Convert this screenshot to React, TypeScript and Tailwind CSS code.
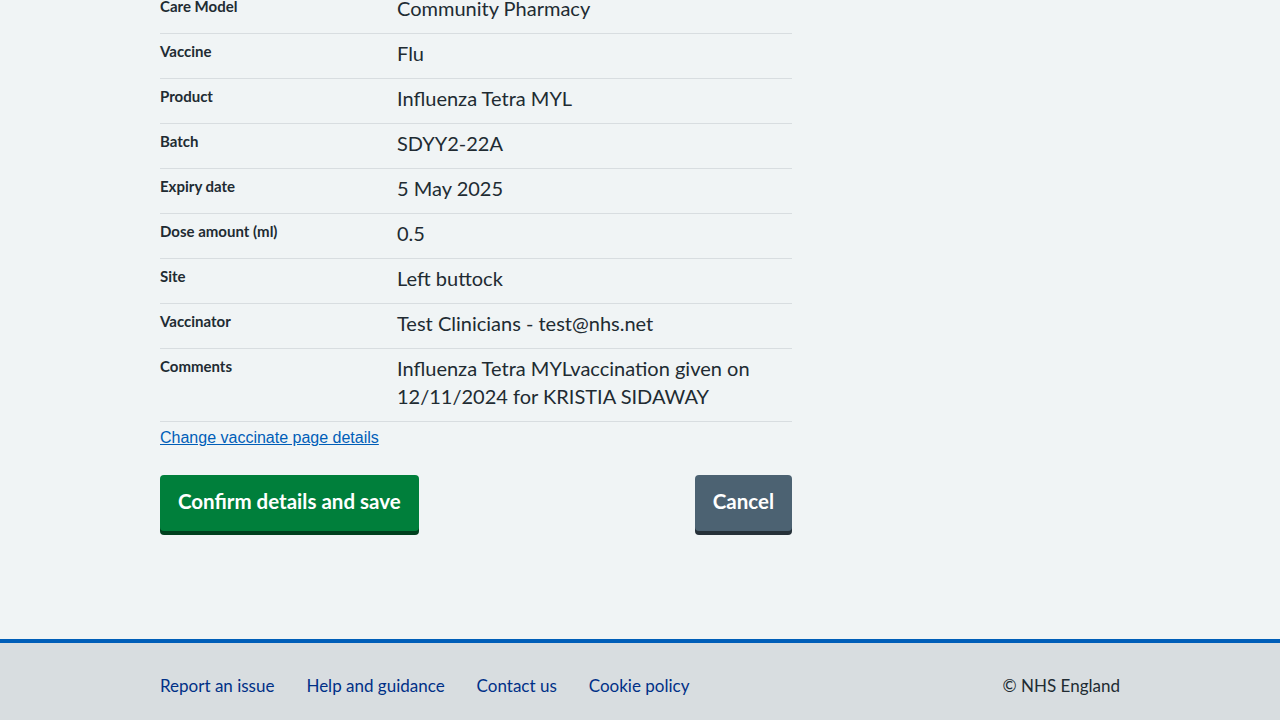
import React from 'react';

const rows: { label: string; value: string }[] = [
  { label: 'Care Model', value: 'Community Pharmacy' },
  { label: 'Vaccine', value: 'Flu' },
  { label: 'Product', value: 'Influenza Tetra MYL' },
  { label: 'Batch', value: 'SDYY2-22A' },
  { label: 'Expiry date', value: '5 May 2025' },
  { label: 'Dose amount (ml)', value: '0.5' },
  { label: 'Site', value: 'Left buttock' },
  { label: 'Vaccinator', value: 'Test Clinicians - test@nhs.net' },
  { label: 'Comments', value: 'Influenza Tetra MYLvaccination given on 12/11/2024 for KRISTIA SIDAWAY' },
];

const footerLinks = ['Report an issue', 'Help and guidance', 'Contact us', 'Cookie policy'];

export default function App() {
  return (
    <div className="min-h-[720px] bg-[#f0f4f5] text-[#212b32] font-['Lato','Noto_Sans',sans-serif] overflow-hidden">
      <main className="mx-auto w-[960px] pb-[108px]">
        <div className="w-[632px]">
          {/* summary list, page is scrolled so first row is clipped */}
          <dl className="-mt-[11px]">
            {rows.map((row) => (
              <div key={row.label} className="flex border-b border-[#d8dde0] pt-[5px] pb-[11px]">
                <dt className="w-[237px] shrink-0 pt-[2px] text-[15px] font-bold leading-[20px]">{row.label}</dt>
                <dd className="flex-1 pr-[16px] text-[20px] leading-[28px]">{row.value}</dd>
              </div>
            ))}
          </dl>

          <a href="#" className="mt-[7px] block w-fit font-['Liberation_Sans',Arial,sans-serif] text-[16px] leading-[18px] text-[#005eb8] underline">
            Change vaccinate page details
          </a>

          <div className="mt-[28px] flex items-start justify-between">
            <button className="h-[56px] rounded-[4px] bg-[#007f3b] px-[18px] pb-[4px] text-[20.5px] font-bold text-white shadow-[0_4px_0_#00401e]">
              Confirm details and save
            </button>
            <button className="h-[56px] rounded-[4px] bg-[#4c6272] px-[18px] pb-[4px] text-[20.5px] font-bold text-white shadow-[0_4px_0_#263139]">
              Cancel
            </button>
          </div>
        </div>
      </main>

      <footer className="border-t-4 border-[#005eb8] bg-[#d8dde0]">
        <div className="mx-auto flex h-[90px] w-[960px] items-start justify-between pt-[31px]">
          <ul className="flex gap-[32px]">
            {footerLinks.map((l) => (
              <li key={l}>
                <a href="#" className="text-[17px] leading-[24px] text-[#003087]">{l}</a>
              </li>
            ))}
          </ul>
          <p className="text-[17px] leading-[24px] text-[#212b32]">© NHS England</p>
        </div>
      </footer>
    </div>
  );
}
